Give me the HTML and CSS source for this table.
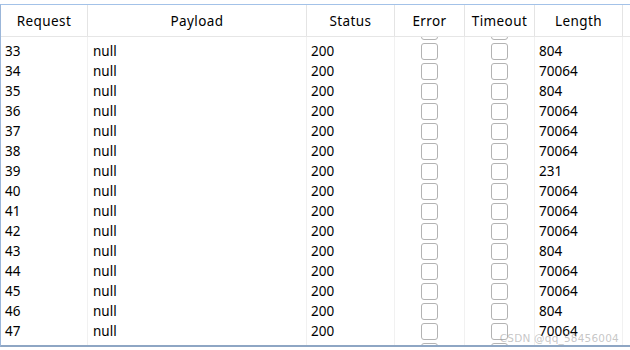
FILE: index.html
```html
<!DOCTYPE html>
<html lang="en">
<head>
<meta charset="utf-8">
<title>Intruder results</title>
<link rel="stylesheet" href="styles.css">
</head>
<body>
<div class="results">
  <div class="row head">
    <div class="cell c-req">Request</div>
    <div class="cell c-pay">Payload</div>
    <div class="cell c-status">Status</div>
    <div class="cell c-err">Error</div>
    <div class="cell c-to">Timeout</div>
    <div class="cell c-len">Length</div>
  </div>
  <div class="viewport">
    <div class="rows">
      <div class="row"><div class="cell c-req"></div><div class="cell c-pay"></div><div class="cell c-status"></div><div class="cell c-err"><span class="box"></span></div><div class="cell c-to"><span class="box"></span></div><div class="cell c-len"></div></div>
      <div class="row"><div class="cell c-req">33</div><div class="cell c-pay">null</div><div class="cell c-status">200</div><div class="cell c-err"><span class="box"></span></div><div class="cell c-to"><span class="box"></span></div><div class="cell c-len">804</div></div>
      <div class="row"><div class="cell c-req">34</div><div class="cell c-pay">null</div><div class="cell c-status">200</div><div class="cell c-err"><span class="box"></span></div><div class="cell c-to"><span class="box"></span></div><div class="cell c-len">70064</div></div>
      <div class="row"><div class="cell c-req">35</div><div class="cell c-pay">null</div><div class="cell c-status">200</div><div class="cell c-err"><span class="box"></span></div><div class="cell c-to"><span class="box"></span></div><div class="cell c-len">804</div></div>
      <div class="row"><div class="cell c-req">36</div><div class="cell c-pay">null</div><div class="cell c-status">200</div><div class="cell c-err"><span class="box"></span></div><div class="cell c-to"><span class="box"></span></div><div class="cell c-len">70064</div></div>
      <div class="row"><div class="cell c-req">37</div><div class="cell c-pay">null</div><div class="cell c-status">200</div><div class="cell c-err"><span class="box"></span></div><div class="cell c-to"><span class="box"></span></div><div class="cell c-len">70064</div></div>
      <div class="row"><div class="cell c-req">38</div><div class="cell c-pay">null</div><div class="cell c-status">200</div><div class="cell c-err"><span class="box"></span></div><div class="cell c-to"><span class="box"></span></div><div class="cell c-len">70064</div></div>
      <div class="row"><div class="cell c-req">39</div><div class="cell c-pay">null</div><div class="cell c-status">200</div><div class="cell c-err"><span class="box"></span></div><div class="cell c-to"><span class="box"></span></div><div class="cell c-len">231</div></div>
      <div class="row"><div class="cell c-req">40</div><div class="cell c-pay">null</div><div class="cell c-status">200</div><div class="cell c-err"><span class="box"></span></div><div class="cell c-to"><span class="box"></span></div><div class="cell c-len">70064</div></div>
      <div class="row"><div class="cell c-req">41</div><div class="cell c-pay">null</div><div class="cell c-status">200</div><div class="cell c-err"><span class="box"></span></div><div class="cell c-to"><span class="box"></span></div><div class="cell c-len">70064</div></div>
      <div class="row"><div class="cell c-req">42</div><div class="cell c-pay">null</div><div class="cell c-status">200</div><div class="cell c-err"><span class="box"></span></div><div class="cell c-to"><span class="box"></span></div><div class="cell c-len">70064</div></div>
      <div class="row"><div class="cell c-req">43</div><div class="cell c-pay">null</div><div class="cell c-status">200</div><div class="cell c-err"><span class="box"></span></div><div class="cell c-to"><span class="box"></span></div><div class="cell c-len">804</div></div>
      <div class="row"><div class="cell c-req">44</div><div class="cell c-pay">null</div><div class="cell c-status">200</div><div class="cell c-err"><span class="box"></span></div><div class="cell c-to"><span class="box"></span></div><div class="cell c-len">70064</div></div>
      <div class="row"><div class="cell c-req">45</div><div class="cell c-pay">null</div><div class="cell c-status">200</div><div class="cell c-err"><span class="box"></span></div><div class="cell c-to"><span class="box"></span></div><div class="cell c-len">70064</div></div>
      <div class="row"><div class="cell c-req">46</div><div class="cell c-pay">null</div><div class="cell c-status">200</div><div class="cell c-err"><span class="box"></span></div><div class="cell c-to"><span class="box"></span></div><div class="cell c-len">804</div></div>
      <div class="row"><div class="cell c-req">47</div><div class="cell c-pay">null</div><div class="cell c-status">200</div><div class="cell c-err"><span class="box"></span></div><div class="cell c-to"><span class="box"></span></div><div class="cell c-len">70064</div></div>
      <div class="row"><div class="cell c-req"></div><div class="cell c-pay"></div><div class="cell c-status"></div><div class="cell c-err"><span class="box"></span></div><div class="cell c-to"><span class="box"></span></div><div class="cell c-len"></div></div>
    </div>
  </div>
  <div class="watermark">CSDN @qq_58456004</div>
</div>
</body>
</html>
```
FILE: styles.css
```css
html, body {
  margin: 0;
  padding: 0;
  background: #ffffff;
}

body {
  font-family: "Noto Sans", "Open Sans", sans-serif;
  font-size: 13.5px;
  color: #000000;
  padding-top: 4px;
}

.results {
  position: relative;
  width: 629px;
  border-top: 1px solid #a3c2e8;
  border-left: 1px solid #9bb6d9;
  border-bottom: 2px solid #8ea6c4;
}

.row {
  display: grid;
  grid-template-columns: 87px 219px 88px 70px 70px 88px;
  height: 20px;
}

.cell {
  box-sizing: border-box;
  border-right: 1px solid #f1f1f1;
  padding-left: 4px;
  line-height: 20px;
  white-space: nowrap;
  overflow: hidden;
}

.c-pay {
  padding-left: 5px;
}

/* column header strip */
.head {
  height: 31px;
  border-bottom: 1px solid #e6e6e6;
  position: relative;
  z-index: 1;
  background: #ffffff;
}

.head .cell {
  border-right-color: #e4e4e4;
  padding-left: 0;
  padding-top: 1px;
  text-align: center;
  line-height: 30px;
  letter-spacing: 0.4px;
}

/* scrolled row area */
.viewport {
  height: 308px;
  overflow: hidden;
}

.rows {
  margin-top: -16px;
}

.c-err,
.c-to {
  display: flex;
  justify-content: center;
  padding-left: 0;
}

.box {
  display: block;
  box-sizing: border-box;
  width: 17px;
  height: 17px;
  margin-top: 2px;
  border: 1px solid #b3b3b3;
  border-radius: 3px;
  background: #ffffff;
}

.watermark {
  position: absolute;
  right: 11px;
  bottom: 1px;
  font-family: "DejaVu Sans", sans-serif;
  font-size: 10.5px;
  color: rgba(150, 150, 150, 0.55);
  letter-spacing: 0.2px;
}
```
